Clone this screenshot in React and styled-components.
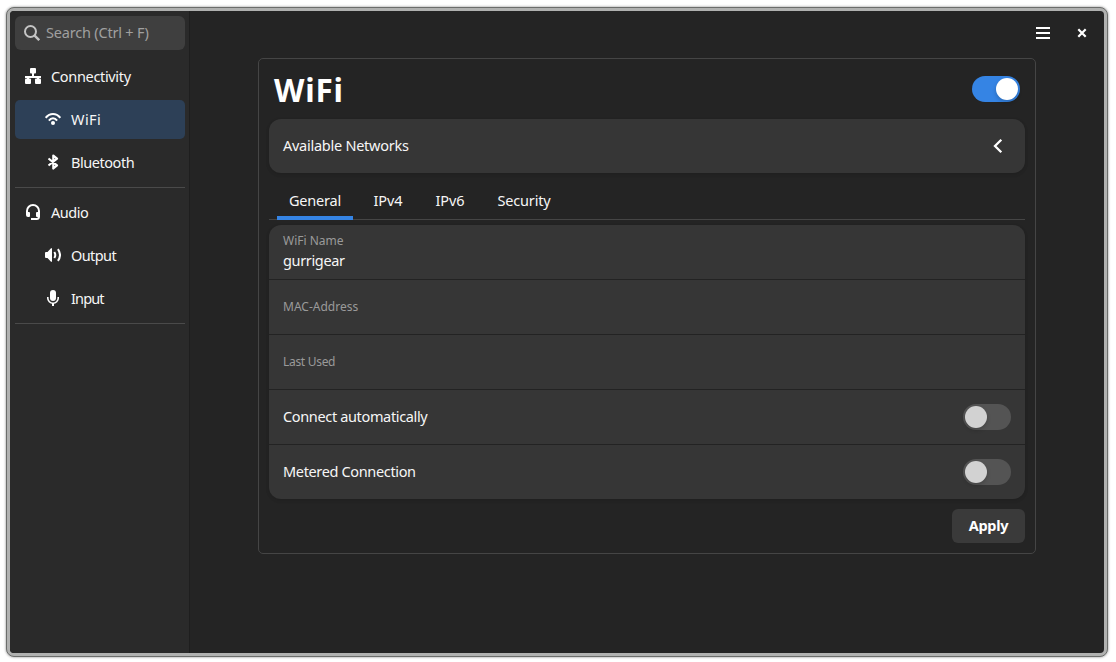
import React from "react";
import styled, { createGlobalStyle } from "styled-components";

const Global = createGlobalStyle`
  *, *::before, *::after { box-sizing: border-box; }
  body {
    margin: 0;
    background: #fff;
    font-family: "Noto Sans", "Open Sans", sans-serif;
    font-size: 14.5px;
    line-height: 20px;
    color: #f6f6f6;
  }
`;

const Desktop = styled.div`
  height: 662px;
  padding: 7px 8px 5px 6px;
  overflow: hidden;
`;

const Frame = styled.div`
  height: 650px;
  padding: 3px;
  border: 1px solid #6b6d6b;
  border-radius: 8px;
  background: #b0b1b0;
  box-shadow: 0 0 2px 1px rgba(0, 0, 0, 0.22);
`;

const Window = styled.div`
  display: flex;
  height: 642px;
  border-radius: 4px;
  overflow: hidden;
  background: #242424;
`;

const Sidebar = styled.aside`
  width: 180px;
  padding: 5px 4px 0 5px;
  background: #2a2a2a;
  border-right: 1px solid #1e1e1e;
`;

const Search = styled.div`
  display: flex;
  align-items: center;
  gap: 6px;
  height: 34px;
  margin-bottom: 7px;
  padding: 0 9px;
  border-radius: 6px;
  background: #3f3f3f;
  color: #a0a0a0;
  white-space: nowrap;
  svg { color: #c4c4c4; }
`;

const Nav = styled.nav`
  display: flex;
  flex-direction: column;
  gap: 4px;
  padding-bottom: 5px;
  margin-bottom: 5px;
  border-bottom: 1px solid #4a4a4a;
`;

const Label = styled.span`
  margin-top: -2px;
  white-space: nowrap;
  letter-spacing: ${(p) => p.$track ?? -0.35}px;
`;

const NavItem = styled.div`
  display: flex;
  align-items: center;
  gap: 10px;
  height: 39px;
  padding-left: ${(p) => (p.$nested ? 30 : 10)}px;
  padding-bottom: 1px;
  border-radius: 5px;
  background: ${(p) => (p.$active ? "#2d4057" : "transparent")};
  ${Label} { margin-top: 0; }
`;

const Main = styled.main`
  flex: 1;
`;

const HeaderBar = styled.header`
  display: flex;
  align-items: center;
  justify-content: flex-end;
  gap: 23px;
  height: 44px;
  margin-bottom: 3px;
  padding-right: 14px;
`;

const Panel = styled.section`
  width: 778px;
  height: 496px;
  margin-left: 68px;
  padding: 10px;
  border: 1px solid #454545;
  border-radius: 5px;
`;

const TitleRow = styled.div`
  display: flex;
  align-items: center;
  justify-content: space-between;
  height: 40px;
  margin-bottom: 10px;
  padding: 0 5px;
`;

const Title = styled.h1`
  margin: 1px 0 0;
  font-size: 31.5px;
  line-height: 40px;
  font-weight: 700;
  letter-spacing: 0.8px;
  color: #fff;
`;

const Card = styled.div`
  border-radius: 12px;
  background: #363636;
  box-shadow: 0 1px 3px 1px rgba(0, 0, 0, 0.07), 0 2px 4px rgba(0, 0, 0, 0.05);
`;

const Row = styled.div`
  display: flex;
  align-items: center;
  justify-content: space-between;
  height: ${(p) => (p.$last ? 54 : 55)}px;
  padding: 0 ${(p) => p.$end || 14}px 0 14px;
  border-bottom: ${(p) => (p.$last ? "none" : "1px solid #232323")};
`;

const Field = styled.div`
  display: flex;
  flex-direction: column;
  margin-bottom: 3px;
  ${Label} { margin-top: -1px; }
`;

const Caption = styled.span`
  color: #9a9a9a;
  font-size: 12px;
  letter-spacing: ${(p) => p.$track || 0}px;
`;

const Tabs = styled.div`
  display: flex;
  height: 37px;
  margin: 10px 0 5px;
  padding-left: 8px;
  border-bottom: 1px solid #454545;
`;

const Tab = styled.div`
  height: 37px;
  width: ${(p) => p.$w}px;
  margin-right: 8px;
  padding-top: 7px;
  text-align: center;
  border-bottom: ${(p) => (p.$active ? "4px solid #3584e4" : "none")};
`;

const Toggle = styled.div`
  display: flex;
  justify-content: ${(p) => (p.$on ? "flex-end" : "flex-start")};
  width: 48px;
  height: 26px;
  padding: 2px;
  border-radius: 13px;
  background: ${(p) => (p.$on ? "#3584e4" : "#545454")};
`;

const Knob = styled.div`
  width: 22px;
  height: 22px;
  border-radius: 50%;
  background: ${(p) => (p.$on ? "#fff" : "#d2d2d2")};
  box-shadow: 0 2px 4px rgba(0, 0, 0, 0.2);
`;

const Actions = styled.div`
  display: flex;
  justify-content: flex-end;
  margin-top: 10px;
`;

const Button = styled.button`
  width: 73px;
  height: 34px;
  padding: 0 0 2px;
  border: 0;
  border-radius: 6px;
  background: #3a3a3a;
  color: #fff;
  font: 700 14.5px/20px "Noto Sans", sans-serif;
  letter-spacing: -0.25px;
`;

const Glyph = styled.svg`
  flex: none;
  width: 16px;
  height: 16px;
  fill: none;
  stroke: currentColor;
  color: #fff;
`;

const SearchIcon = () => (
  <Glyph viewBox="0 0 16 16" strokeWidth="2">
    <circle cx="6.5" cy="6.5" r="5.5" />
    <path d="M10.4 10.4 15.2 15.2" strokeWidth="2.4" />
  </Glyph>
);
const NetworkIcon = () => (
  <Glyph viewBox="0 0 16 16">
    <g fill="currentColor" stroke="none">
      <rect x="5" y="0" width="6" height="5.400" rx="1" />
      <rect x="0" y="10.600" width="6" height="5.400" rx="1" />
      <rect x="10" y="10.600" width="6" height="5.400" rx="1" />
      <path d="M7 5h2v3h7v2h-2v1h-2V10H4v1H2v-1H0V8h7z" />
    </g>
  </Glyph>
);
const WifiIcon = () => (
  <Glyph viewBox="0 0 16 16" strokeWidth="2">
    <path d="M.7 6.800C4.800 1.700 11.200 1.700 15.300 6.800" />
    <path d="M3.900 9.600C6.200 6.500 9.800 6.500 12.100 9.600" />
    <circle cx="8" cy="12" r="2" fill="currentColor" stroke="none" />
  </Glyph>
);
const BluetoothIcon = () => (
  <Glyph viewBox="0 0 16 16" strokeWidth="2.200">
    <path d="M3.500 4.500 12 11.300 8.300 14.500V1.500L12 4.700 3.500 11.500" strokeLinejoin="round" />
  </Glyph>
);
const HeadsetIcon = () => (
  <Glyph viewBox="0 0 16 16" strokeWidth="2">
    <path d="M2 10V7a6 6 0 0 1 12 0v5.500a2.500 2.500 0 0 1-2.500 2.500H6" />
    <path fill="currentColor" stroke="none" d="M1 8h3q1 0 1 1v3q0 1-1 1H3q-2 0-2-2zM15 8h-3q-1 0-1 1v3q0 1 1 1h3z" />
  </Glyph>
);
const SpeakerIcon = () => (
  <Glyph viewBox="0 0 16 16" strokeWidth="2">
    <path fill="currentColor" stroke="none" d="M1 5h1.500L6 1.200h1v13.600H6L2.500 11H1q-1 0-1-1V6q0-1 1-1z" />
    <path d="M9.300 5q2 3 0 6" />
    <path d="M12.900 2.200q4.200 5.800 0 11.600" />
  </Glyph>
);
const MicIcon = () => (
  <Glyph viewBox="0 0 16 16" strokeWidth="1.600">
    <rect x="5" y="0" width="6" height="11" rx="3" fill="currentColor" stroke="none" />
    <path d="M2.800 7v1.300a5.200 4.900 0 0 0 10.400 0V7" />
    <path d="M8 13v3" strokeWidth="2" />
  </Glyph>
);
const MenuIcon = () => (
  <Glyph viewBox="0 0 16 16" strokeWidth="2">
    <path d="M1 3h14M1 8h14M1 13h14" />
  </Glyph>
);
const CloseIcon = () => (
  <Glyph viewBox="0 0 16 16" strokeWidth="2.200">
    <path d="m4.300 4.300 7.400 7.400m0-7.400-7.400 7.400" />
  </Glyph>
);
const ChevronIcon = () => (
  <Glyph viewBox="0 0 16 16" strokeWidth="2.300">
    <path d="M11.300 1.700 5 8l6.300 6.300" />
  </Glyph>
);

const Switch = ({ on }) => (
  <Toggle $on={on}>
    <Knob $on={on} />
  </Toggle>
);

export default function App() {
  return (
    <Desktop>
      <Global />
      <Frame>
        <Window>
          <Sidebar>
            <Search>
              <SearchIcon />
              <Label $track={-0.2}>Search (Ctrl + F)</Label>
            </Search>
            <Nav>
              <NavItem><NetworkIcon /><Label $track={-0.33}>Connectivity</Label></NavItem>
              <NavItem $nested $active><WifiIcon /><Label $track={0.4}>WiFi</Label></NavItem>
              <NavItem $nested><BluetoothIcon /><Label $track={-0.45}>Bluetooth</Label></NavItem>
            </Nav>
            <Nav>
              <NavItem><HeadsetIcon /><Label $track={-0.45}>Audio</Label></NavItem>
              <NavItem $nested><SpeakerIcon /><Label $track={-0.6}>Output</Label></NavItem>
              <NavItem $nested><MicIcon /><Label $track={-0.85}>Input</Label></NavItem>
            </Nav>
          </Sidebar>
          <Main>
            <HeaderBar>
              <MenuIcon />
              <CloseIcon />
            </HeaderBar>
            <Panel>
              <TitleRow>
                <Title>WiFi</Title>
                <Switch on />
              </TitleRow>
              <Card>
                <Row $last $end={19}>
                  <Label $track={-0.26}>Available Networks</Label>
                  <ChevronIcon />
                </Row>
              </Card>
              <Tabs>
                <Tab $active $w={76}><Label $track={-0.2}>General</Label></Tab>
                <Tab $w={54}><Label $track={-0.1}>IPv4</Label></Tab>
                <Tab $w={54}><Label $track={-0.1}>IPv6</Label></Tab>
                <Tab $w={78}><Label $track={-0.15}>Security</Label></Tab>
              </Tabs>
              <Card>
                <Row>
                  <Field>
                    <Caption>WiFi Name</Caption>
                    <Label>gurrigear</Label>
                  </Field>
                </Row>
                <Row><Caption>MAC-Address</Caption></Row>
                <Row><Caption $track={-0.3}>Last Used</Caption></Row>
                <Row><Label>Connect automatically</Label><Switch /></Row>
                <Row $last><Label>Metered Connection</Label><Switch /></Row>
              </Card>
              <Actions><Button>Apply</Button></Actions>
            </Panel>
          </Main>
        </Window>
      </Frame>
    </Desktop>
  );
}
